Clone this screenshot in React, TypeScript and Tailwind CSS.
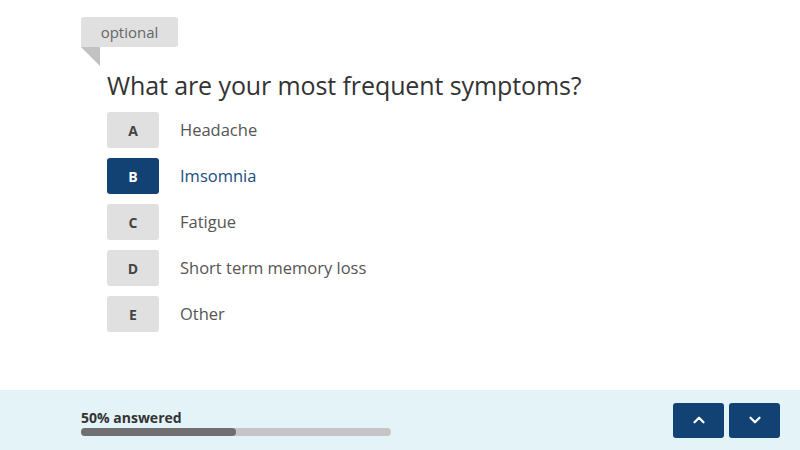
import { ChevronUp, ChevronDown } from 'lucide-react';

const options = [
  { key: 'A', label: 'Headache' },
  { key: 'B', label: 'Imsomnia', selected: true },
  { key: 'C', label: 'Fatigue' },
  { key: 'D', label: 'Short term memory loss' },
  { key: 'E', label: 'Other' },
];

export default function App() {
  return (
    <div
      className="w-[800px] h-[450px] bg-white flex flex-col overflow-hidden"
      style={{ fontFamily: '"Open Sans", "Noto Sans", sans-serif' }}
    >
      <div className="flex-1 pl-[81px] pt-[17px]">
        {/* optional tag */}
        <div className="flex flex-col items-start">
          <div className="w-[97px] h-[30px] bg-[#e0e0e0] rounded-t-[3px] rounded-br-[3px] flex items-center justify-center text-[15px] text-[#666]">
            optional
          </div>
          <div className="w-0 h-0 border-t-[19px] border-t-[#c2c2c2] border-l-[19px] border-l-transparent" />
        </div>

        <div className="pl-[26px] mt-[2px]">
          <h1 className="text-[25px] leading-[34px] text-[#333] tracking-[-0.1px]">
            What are your most frequent symptoms?
          </h1>

          <div className="mt-[10px] flex flex-col gap-[10px]">
            {options.map((o) => (
              <div key={o.key} className="flex items-center">
                <div
                  className={
                    o.selected
                      ? 'w-[52px] h-[36px] rounded-[3px] bg-[#124274] text-white flex items-center justify-center text-[14px] font-bold'
                      : 'w-[52px] h-[36px] rounded-[3px] bg-[#e0e0e0] text-[#444] flex items-center justify-center text-[14px] font-bold'
                  }
                >
                  {o.key}
                </div>
                <span
                  className={
                    o.selected
                      ? 'ml-[21px] text-[16.5px] text-[#1b4c7e]'
                      : 'ml-[21px] text-[16.5px] text-[#555]'
                  }
                >
                  {o.label}
                </span>
              </div>
            ))}
          </div>
        </div>
      </div>

      {/* footer */}
      <div className="h-[60px] bg-[#e4f3f7] flex items-center justify-between pl-[81px] pr-[20px]">
        <div className="pt-[4px]">
          <div className="text-[14px] font-bold text-[#333] leading-[17px]">50% answered</div>
          <div className="mt-[2px] w-[310px] h-[8px] rounded-full bg-[#c5c5c5]">
            <div className="w-1/2 h-full rounded-full bg-[#6f6f6f]" />
          </div>
        </div>
        <div className="flex gap-[5px]">
          <button className="w-[51px] h-[35px] rounded-[3px] bg-[#124274] text-white flex items-center justify-center">
            <ChevronUp size={18} strokeWidth={3} />
          </button>
          <button className="w-[51px] h-[35px] rounded-[3px] bg-[#124274] text-white flex items-center justify-center">
            <ChevronDown size={18} strokeWidth={3} />
          </button>
        </div>
      </div>
    </div>
  );
}
